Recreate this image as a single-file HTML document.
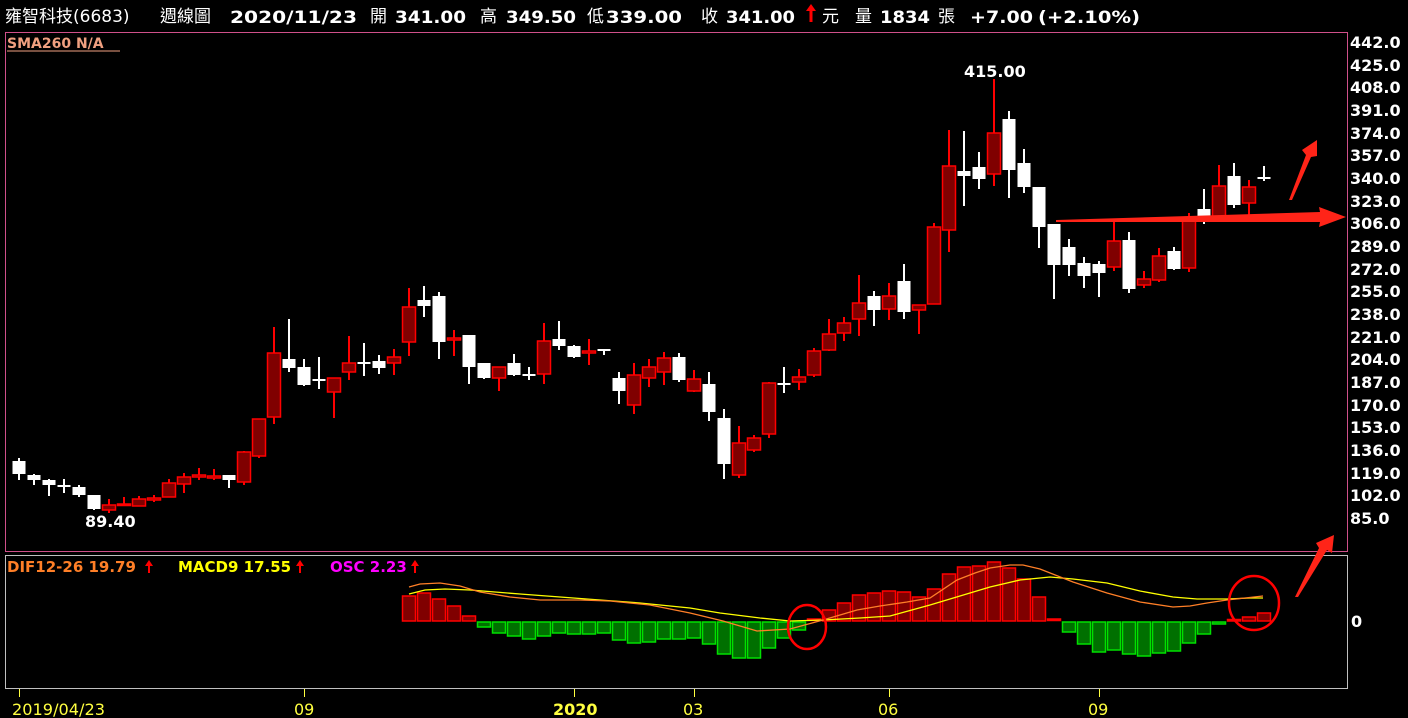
<!DOCTYPE html>
<html><head><meta charset="utf-8"><style>
html,body{margin:0;padding:0;background:#000;width:1408px;height:718px;overflow:hidden}
svg{display:block}
.h{font-family:"DejaVu Sans","Noto Sans CJK TC",sans-serif;font-weight:bold;font-size:17px;fill:#fff}
.p{font-family:"DejaVu Sans",sans-serif;font-weight:bold;font-size:16px;fill:#fff}
.d{font-family:"DejaVu Sans",sans-serif;font-size:16px;fill:#ffff40}
.m{font-family:"DejaVu Sans",sans-serif;font-weight:bold;font-size:15px}
.rw line{stroke:#f00;stroke-width:2}
.rw rect{fill:#800000;stroke:#f00;stroke-width:1.5}
.ww line{stroke:#fff;stroke-width:2}
.ww rect{fill:#fff}
.gb rect{fill:#007000;stroke:#00e000;stroke-width:1.5}
.rb rect{fill:#800000;stroke:#f00;stroke-width:1.5}
</style></head><body>
<svg width="1408" height="718" viewBox="0 0 1408 718" xmlns="http://www.w3.org/2000/svg">
<rect width="1408" height="718" fill="#000"/>
<text x="5" y="22" class="h" style="font-weight:normal">雍智科技(6683)</text>
<text x="160" y="22" class="h" style="font-weight:normal">週線圖</text>
<text x="230" y="23" class="h" textLength="127" lengthAdjust="spacingAndGlyphs">2020/11/23</text>
<text x="370" y="22" class="h" style="font-weight:normal">開</text>
<text x="395" y="23" class="h" textLength="71" lengthAdjust="spacingAndGlyphs">341.00</text>
<text x="480" y="22" class="h" style="font-weight:normal">高</text>
<text x="506" y="23" class="h" textLength="70" lengthAdjust="spacingAndGlyphs">349.50</text>
<text x="587" y="22" class="h" style="font-weight:normal">低</text>
<text x="606" y="23" class="h" textLength="76" lengthAdjust="spacingAndGlyphs">339.00</text>
<text x="701" y="22" class="h" style="font-weight:normal">收</text>
<text x="726" y="23" class="h" textLength="69" lengthAdjust="spacingAndGlyphs">341.00</text>
<path d="M811,4 L806,11 L809.5,11 L809.5,22 L812.5,22 L812.5,11 L816,11 Z" fill="#f00"/>
<text x="822" y="22" class="h" style="font-weight:normal">元</text>
<text x="855" y="22" class="h" style="font-weight:normal">量</text>
<text x="880" y="23" class="h" textLength="50" lengthAdjust="spacingAndGlyphs">1834</text>
<text x="938" y="22" class="h" style="font-weight:normal">張</text>
<text x="970" y="23" class="h" textLength="63" lengthAdjust="spacingAndGlyphs">+7.00</text>
<text x="1038" y="23" class="h" textLength="102" lengthAdjust="spacingAndGlyphs">(+2.10%)</text>

<rect x="5.5" y="32.5" width="1342" height="519" fill="none" stroke="#d0508a" stroke-width="1"/>
<rect x="5.5" y="555.5" width="1342" height="133" fill="none" stroke="#c0c0c0" stroke-width="1"/>
<text x="7" y="48" font-family="DejaVu Sans,sans-serif" font-weight="bold" font-size="14" fill="#f0a080">SMA260 N/A</text>
<line x1="7" y1="51" x2="120" y2="51" stroke="#f0a080" stroke-width="1"/>

<g class="p">
<text x="1350" y="48">442.0</text><text x="1350" y="71">425.0</text><text x="1350" y="93">408.0</text><text x="1350" y="116">391.0</text><text x="1350" y="139">374.0</text><text x="1350" y="161">357.0</text><text x="1350" y="184">340.0</text><text x="1350" y="207">323.0</text><text x="1350" y="229">306.0</text><text x="1350" y="252">289.0</text><text x="1350" y="275">272.0</text><text x="1350" y="297">255.0</text><text x="1350" y="320">238.0</text><text x="1350" y="343">221.0</text><text x="1350" y="365">204.0</text><text x="1350" y="388">187.0</text><text x="1350" y="411">170.0</text><text x="1350" y="433">153.0</text><text x="1350" y="456">136.0</text><text x="1350" y="479">119.0</text><text x="1350" y="501">102.0</text><text x="1350" y="524">85.0</text>
<text x="1351" y="627">0</text>
</g>
<text x="964" y="77" class="p">415.00</text>
<text x="85" y="527" class="p">89.40</text>

<g class="ww">
<line x1="19" y1="458" x2="19" y2="480"/><rect x="12.5" y="461" width="13" height="13"/>
<line x1="34" y1="474" x2="34" y2="485"/><rect x="27.5" y="475" width="13" height="5"/>
<line x1="49" y1="479" x2="49" y2="496"/><rect x="42.5" y="480" width="13" height="5"/>
<line x1="64" y1="479" x2="64" y2="493"/><rect x="57.5" y="485" width="13" height="2"/>
<line x1="79" y1="485" x2="79" y2="497"/><rect x="72.5" y="487" width="13" height="8"/>
<line x1="94" y1="495" x2="94" y2="510"/><rect x="87.5" y="495" width="13" height="14"/>
<line x1="229" y1="475" x2="229" y2="488"/><rect x="222.5" y="475" width="13" height="5"/>
<line x1="289" y1="319" x2="289" y2="372"/><rect x="282.5" y="359" width="13" height="9"/>
<line x1="304" y1="359" x2="304" y2="386"/><rect x="297.5" y="367" width="13" height="18"/>
<line x1="319" y1="357" x2="319" y2="389"/><rect x="312.5" y="379" width="13" height="2"/>
<line x1="364" y1="343" x2="364" y2="376"/><rect x="357.5" y="362" width="13" height="2"/>
<line x1="379" y1="355" x2="379" y2="374"/><rect x="372.5" y="361" width="13" height="7"/>
<line x1="424" y1="286" x2="424" y2="317"/><rect x="417.5" y="300" width="13" height="6"/>
<line x1="439" y1="292" x2="439" y2="359"/><rect x="432.5" y="296" width="13" height="46"/>
<line x1="469" y1="335" x2="469" y2="384"/><rect x="462.5" y="335" width="13" height="32"/>
<line x1="484" y1="363" x2="484" y2="379"/><rect x="477.5" y="363" width="13" height="15"/>
<line x1="514" y1="354" x2="514" y2="376"/><rect x="507.5" y="363" width="13" height="12"/>
<line x1="529" y1="367" x2="529" y2="380"/><rect x="522.5" y="374" width="13" height="2"/>
<line x1="559" y1="321" x2="559" y2="350"/><rect x="552.5" y="339" width="13" height="7"/>
<line x1="574" y1="345" x2="574" y2="358"/><rect x="567.5" y="346" width="13" height="11"/>
<line x1="604" y1="349" x2="604" y2="355"/><rect x="597.5" y="349" width="13" height="2"/>
<line x1="619" y1="372" x2="619" y2="404"/><rect x="612.5" y="378" width="13" height="13"/>
<line x1="679" y1="353" x2="679" y2="382"/><rect x="672.5" y="357" width="13" height="23"/>
<line x1="709" y1="372" x2="709" y2="421"/><rect x="702.5" y="384" width="13" height="28"/>
<line x1="724" y1="409" x2="724" y2="479"/><rect x="717.5" y="418" width="13" height="46"/>
<line x1="784" y1="367" x2="784" y2="393"/><rect x="777.5" y="383" width="13" height="2"/>
<line x1="874" y1="291" x2="874" y2="326"/><rect x="867.5" y="296" width="13" height="14"/>
<line x1="904" y1="264" x2="904" y2="319"/><rect x="897.5" y="281" width="13" height="31"/>
<line x1="964" y1="131" x2="964" y2="206"/><rect x="957.5" y="171" width="13" height="5"/>
<line x1="979" y1="152" x2="979" y2="189"/><rect x="972.5" y="167" width="13" height="12"/>
<line x1="1009" y1="111" x2="1009" y2="198"/><rect x="1002.5" y="119" width="13" height="51"/>
<line x1="1024" y1="149" x2="1024" y2="193"/><rect x="1017.5" y="163" width="13" height="24"/>
<line x1="1039" y1="187" x2="1039" y2="248"/><rect x="1032.5" y="187" width="13" height="40"/>
<line x1="1054" y1="224" x2="1054" y2="299"/><rect x="1047.5" y="224" width="13" height="41"/>
<line x1="1069" y1="239" x2="1069" y2="276"/><rect x="1062.5" y="247" width="13" height="18"/>
<line x1="1084" y1="257" x2="1084" y2="288"/><rect x="1077.5" y="263" width="13" height="13"/>
<line x1="1099" y1="261" x2="1099" y2="297"/><rect x="1092.5" y="264" width="13" height="9"/>
<line x1="1129" y1="232" x2="1129" y2="293"/><rect x="1122.5" y="240" width="13" height="49"/>
<line x1="1174" y1="247" x2="1174" y2="270"/><rect x="1167.5" y="251" width="13" height="18"/>
<line x1="1204" y1="189" x2="1204" y2="224"/><rect x="1197.5" y="209" width="13" height="8"/>
<line x1="1234" y1="163" x2="1234" y2="208"/><rect x="1227.5" y="176" width="13" height="29"/>
<line x1="1264" y1="166" x2="1264" y2="181"/><rect x="1257.5" y="177" width="13" height="2"/>
</g>
<g class="rw">
<line x1="109" y1="499" x2="109" y2="513"/><rect x="102.5" y="505" width="13" height="5"/>
<line x1="124" y1="497" x2="124" y2="506"/><rect x="117.5" y="504" width="13" height="1.5"/>
<line x1="139" y1="496" x2="139" y2="506"/><rect x="132.5" y="499" width="13" height="7"/>
<line x1="154" y1="495" x2="154" y2="502"/><rect x="147.5" y="498" width="13" height="2"/>
<line x1="169" y1="479" x2="169" y2="497"/><rect x="162.5" y="483" width="13" height="14"/>
<line x1="184" y1="473" x2="184" y2="493"/><rect x="177.5" y="477" width="13" height="7"/>
<line x1="199" y1="468" x2="199" y2="480"/><rect x="192.5" y="475" width="13" height="2"/>
<line x1="214" y1="469" x2="214" y2="480"/><rect x="207.5" y="476" width="13" height="2"/>
<line x1="244" y1="451" x2="244" y2="485"/><rect x="237.5" y="452" width="13" height="30"/>
<line x1="259" y1="419" x2="259" y2="458"/><rect x="252.5" y="419" width="13" height="37"/>
<line x1="274" y1="327" x2="274" y2="424"/><rect x="267.5" y="353" width="13" height="64"/>
<line x1="334" y1="378" x2="334" y2="418"/><rect x="327.5" y="378" width="13" height="14"/>
<line x1="349" y1="336" x2="349" y2="380"/><rect x="342.5" y="363" width="13" height="9"/>
<line x1="394" y1="349" x2="394" y2="375"/><rect x="387.5" y="357" width="13" height="6"/>
<line x1="409" y1="288" x2="409" y2="356"/><rect x="402.5" y="307" width="13" height="35"/>
<line x1="454" y1="330" x2="454" y2="356"/><rect x="447.5" y="338" width="13" height="2"/>
<line x1="499" y1="367" x2="499" y2="391"/><rect x="492.5" y="367" width="13" height="11"/>
<line x1="544" y1="323" x2="544" y2="384"/><rect x="537.5" y="341" width="13" height="33"/>
<line x1="589" y1="339" x2="589" y2="365"/><rect x="582.5" y="351" width="13" height="2"/>
<line x1="634" y1="363" x2="634" y2="414"/><rect x="627.5" y="375" width="13" height="30"/>
<line x1="649" y1="359" x2="649" y2="387"/><rect x="642.5" y="367" width="13" height="11"/>
<line x1="664" y1="352" x2="664" y2="385"/><rect x="657.5" y="358" width="13" height="14"/>
<line x1="694" y1="370" x2="694" y2="392"/><rect x="687.5" y="379" width="13" height="12"/>
<line x1="739" y1="426" x2="739" y2="478"/><rect x="732.5" y="443" width="13" height="32"/>
<line x1="754" y1="435" x2="754" y2="452"/><rect x="747.5" y="438" width="13" height="12"/>
<line x1="769" y1="382" x2="769" y2="438"/><rect x="762.5" y="383" width="13" height="51"/>
<line x1="799" y1="369" x2="799" y2="390"/><rect x="792.5" y="377" width="13" height="5"/>
<line x1="814" y1="348" x2="814" y2="377"/><rect x="807.5" y="351" width="13" height="24"/>
<line x1="829" y1="319" x2="829" y2="351"/><rect x="822.5" y="334" width="13" height="16"/>
<line x1="844" y1="317" x2="844" y2="341"/><rect x="837.5" y="323" width="13" height="10"/>
<line x1="859" y1="275" x2="859" y2="336"/><rect x="852.5" y="303" width="13" height="16"/>
<line x1="889" y1="283" x2="889" y2="320"/><rect x="882.5" y="296" width="13" height="13"/>
<line x1="919" y1="305" x2="919" y2="334"/><rect x="912.5" y="305" width="13" height="5"/>
<line x1="934" y1="223" x2="934" y2="304"/><rect x="927.5" y="227" width="13" height="77"/>
<line x1="949" y1="130" x2="949" y2="252"/><rect x="942.5" y="166" width="13" height="64"/>
<line x1="994" y1="79" x2="994" y2="186"/><rect x="987.5" y="133" width="13" height="41"/>
<line x1="1114" y1="220" x2="1114" y2="271"/><rect x="1107.5" y="241" width="13" height="26"/>
<line x1="1144" y1="271" x2="1144" y2="288"/><rect x="1137.5" y="279" width="13" height="6"/>
<line x1="1159" y1="248" x2="1159" y2="282"/><rect x="1152.5" y="256" width="13" height="24"/>
<line x1="1189" y1="213" x2="1189" y2="272"/><rect x="1182.5" y="219" width="13" height="49"/>
<line x1="1219" y1="165" x2="1219" y2="222"/><rect x="1212.5" y="186" width="13" height="31"/>
<line x1="1249" y1="180" x2="1249" y2="217"/><rect x="1242.5" y="187" width="13" height="16"/>
</g>

<polygon points="1056,220 1320,212 1319,207 1346,217 1319,227 1320,222 1056,222" fill="#ff2418"/>
<polygon points="1289,200 1306,155 1302,150 1317,140 1317,156 1311,157 1292,200" fill="#ff2418"/>

<text x="7" y="572" class="m" fill="#ff7f27">DIF12-26 19.79</text>
<path d="M149,560 L145,566 L148,566 L148,573 L150,573 L150,566 L153,566 Z" fill="#f00"/>
<text x="178" y="572" class="m" fill="#ffff00">MACD9 17.55</text>
<path d="M300,560 L296,566 L299,566 L299,573 L301,573 L301,566 L304,566 Z" fill="#f00"/>
<text x="330" y="572" class="m" fill="#ff00ff">OSC 2.23</text>
<path d="M415,560 L411,566 L414,566 L414,573 L416,573 L416,566 L419,566 Z" fill="#f00"/>

<g class="rb">
<rect x="402.5" y="596" width="13" height="25"/><rect x="417.5" y="593" width="13" height="28"/><rect x="432.5" y="599" width="13" height="22"/><rect x="447.5" y="606" width="13" height="15"/><rect x="462.5" y="616" width="13" height="5"/>
<rect x="807.5" y="619" width="13" height="1.5"/>
<rect x="822.5" y="610" width="13" height="11"/><rect x="837.5" y="603" width="13" height="18"/><rect x="852.5" y="595" width="13" height="26"/><rect x="867.5" y="593" width="13" height="28"/><rect x="882.5" y="591" width="13" height="30"/><rect x="897.5" y="592" width="13" height="29"/><rect x="912.5" y="597" width="13" height="24"/><rect x="927.5" y="589" width="13" height="32"/><rect x="942.5" y="574" width="13" height="47"/><rect x="957.5" y="567" width="13" height="54"/><rect x="972.5" y="566" width="13" height="55"/><rect x="987.5" y="562" width="13" height="59"/><rect x="1002.5" y="568" width="13" height="53"/><rect x="1017.5" y="579" width="13" height="42"/><rect x="1032.5" y="597" width="13" height="24"/><rect x="1047.5" y="619" width="13" height="1.5"/>
<rect x="1227.5" y="619.5" width="13" height="1.5"/><rect x="1242.5" y="617" width="13" height="4"/><rect x="1257.5" y="613" width="13" height="8"/>
</g>
<g class="gb">
<rect x="477.5" y="622" width="13" height="5"/><rect x="492.5" y="622" width="13" height="11"/><rect x="507.5" y="622" width="13" height="14"/><rect x="522.5" y="622" width="13" height="17"/><rect x="537.5" y="622" width="13" height="14"/><rect x="552.5" y="622" width="13" height="11"/><rect x="567.5" y="622" width="13" height="12"/><rect x="582.5" y="622" width="13" height="12"/><rect x="597.5" y="622" width="13" height="11"/><rect x="612.5" y="622" width="13" height="18"/><rect x="627.5" y="622" width="13" height="21"/><rect x="642.5" y="622" width="13" height="20"/><rect x="657.5" y="622" width="13" height="17"/><rect x="672.5" y="622" width="13" height="17"/><rect x="687.5" y="622" width="13" height="16"/><rect x="702.5" y="622" width="13" height="22"/><rect x="717.5" y="622" width="13" height="32"/><rect x="732.5" y="622" width="13" height="36"/><rect x="747.5" y="622" width="13" height="36"/><rect x="762.5" y="622" width="13" height="26"/><rect x="777.5" y="622" width="13" height="16"/><rect x="792.5" y="622" width="13" height="8"/>
<rect x="1062.5" y="622" width="13" height="10"/><rect x="1077.5" y="622" width="13" height="22"/><rect x="1092.5" y="622" width="13" height="30"/><rect x="1107.5" y="622" width="13" height="28"/><rect x="1122.5" y="622" width="13" height="32"/><rect x="1137.5" y="622" width="13" height="34"/><rect x="1152.5" y="622" width="13" height="31"/><rect x="1167.5" y="622" width="13" height="29"/><rect x="1182.5" y="622" width="13" height="21"/><rect x="1197.5" y="622" width="13" height="12"/><rect x="1212.5" y="622" width="13" height="2"/>
</g>
<polyline fill="none" stroke="#ffff00" stroke-width="1.3" points="409,594 425,590 445,589 470,590 520,594 560,597 600,600 640,603 670,606 690,608 720,613 760,618 790,621 823,620 860,618 890,616 930,605 960,596 990,587 1020,580 1050,577 1073,579 1107,583 1140,591 1173,597 1197,599 1227,599 1250,598 1263,598"/>
<polyline fill="none" stroke="#ff7f27" stroke-width="1.3" points="409,587 420,584 440,583 460,586 480,592 510,597 540,600 580,600 610,601 650,605 690,613 723,621 740,626 757,631 790,629 823,620 857,610 880,606 907,602 930,598 957,580 975,573 990,568 1010,565 1023,565 1040,569 1073,582 1107,593 1140,602 1173,607 1190,606 1207,603 1227,600 1263,596"/>
<ellipse cx="807" cy="627" rx="19" ry="22" fill="none" stroke="#f00" stroke-width="2.5"/>
<ellipse cx="1254" cy="603" rx="25" ry="27" fill="none" stroke="#f00" stroke-width="2.5"/>
<polygon points="1295,597 1319,548 1316,543 1334,535 1332,553 1327,550 1298,597" fill="#ff2418"/>

<g stroke="#ffff40" stroke-width="1">
<line x1="19.5" y1="689" x2="19.5" y2="697"/><line x1="304.5" y1="689" x2="304.5" y2="697"/><line x1="574.5" y1="689" x2="574.5" y2="697"/><line x1="694.5" y1="689" x2="694.5" y2="697"/><line x1="889.5" y1="689" x2="889.5" y2="697"/><line x1="1099.5" y1="689" x2="1099.5" y2="697"/>
</g>
<text x="12" y="715" class="d" textLength="93" lengthAdjust="spacingAndGlyphs">2019/04/23</text>
<text x="294" y="715" class="d">09</text>
<text x="553" y="715" class="d" font-weight="bold">2020</text>
<text x="683" y="715" class="d">03</text>
<text x="878" y="715" class="d">06</text>
<text x="1088" y="715" class="d">09</text>
</svg>
</body></html>
